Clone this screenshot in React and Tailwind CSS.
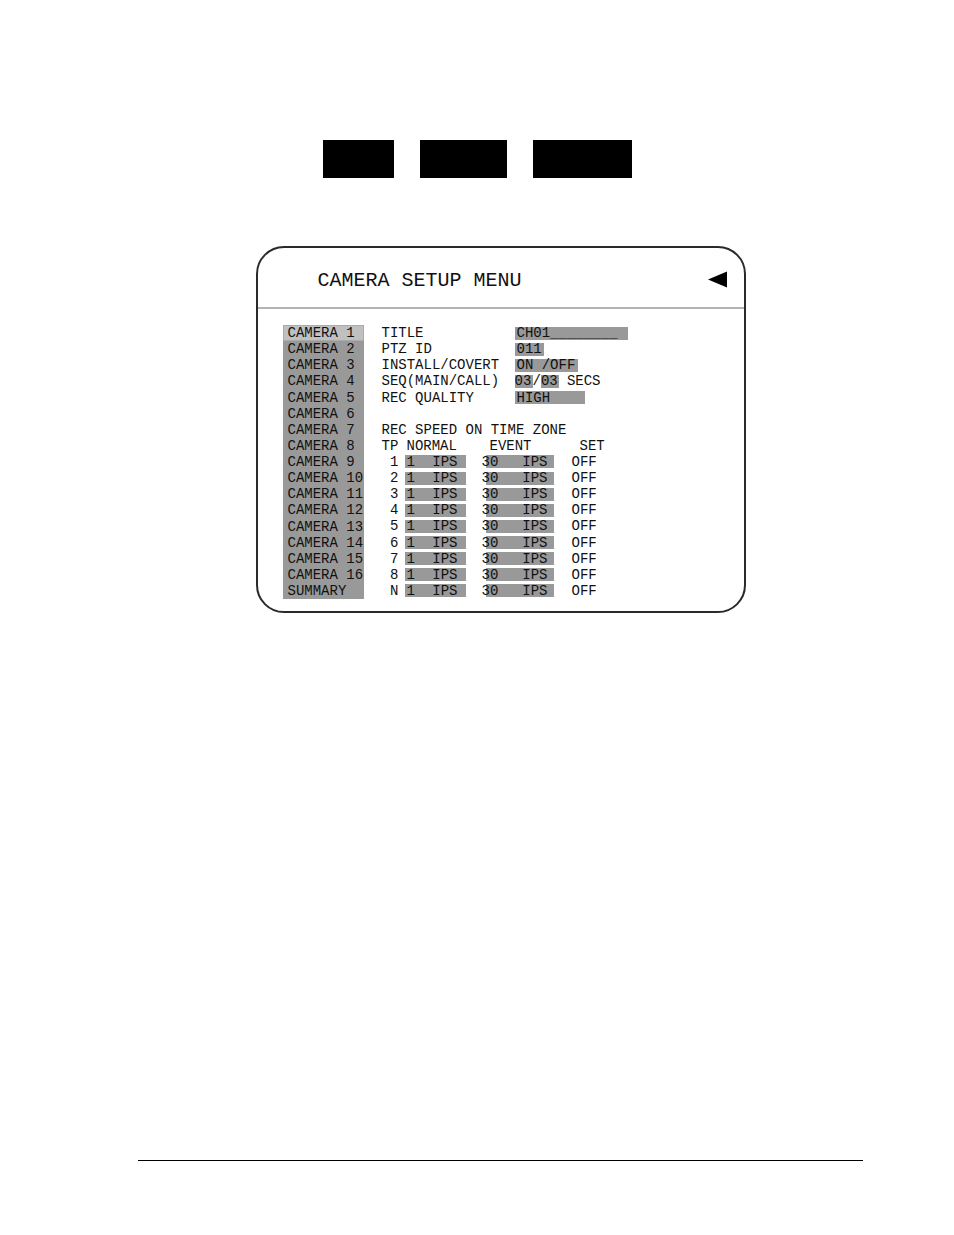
import React, { useState } from 'react';

const MENU = [
    ...Array.from({ length: 16 }, (_, i) => `CAMERA ${i + 1}`),
    'SUMMARY',
];

const ZONES = ['1', '2', '3', '4', '5', '6', '7', '8', 'N'];

const Redacted = ({ className }) => <div className={`h-[38px] bg-black ${className}`} />;

const Row = ({ label, id, children }) => (
    <div className="flex items-center">
        <label htmlFor={id} className="w-[133px] shrink-0">{label}</label>
        {children}
    </div>
);

const Field = ({ id, value, className, ...props }) => (
    <input
        id={id}
        defaultValue={value}
        className={`h-[13px] bg-[#999] leading-3 outline-none ${className}`}
        {...props}
    />
);

const CameraList = () => {
    const [active, setActive] = useState(0);

    return (
        <nav className="flex w-[81px] flex-col bg-[#999]">
            {MENU.map((name, i) => (
                <button
                    key={name}
                    onClick={() => setActive(i)}
                    className={`flex flex-1 items-center pl-[5px] text-left whitespace-nowrap ${
                        i === active ? 'bg-[#c0c0c0] inset-ring inset-ring-[#aaa]' : ''
                    }`}
                >
                    {name}
                </button>
            ))}
        </nav>
    );
};

const SpeedTable = () => (
    <table className="h-full w-full table-fixed border-collapse text-left">
        <colgroup>
            <col className="w-[23px]" />
            <col className="w-[77px]" />
            <col className="w-[90px]" />
            <col />
        </colgroup>
        <thead>
            <tr>
                <th className="p-0 font-normal">TP</th>
                <th className="p-0 pl-[2px] font-normal">NORMAL</th>
                <th className="p-0 pl-2 font-normal">EVENT</th>
                <th className="p-0 pl-2 font-normal">SET</th>
            </tr>
        </thead>
        <tbody>
            {ZONES.map((zone) => (
                <tr key={zone}>
                    <td className="p-0 pr-[6px] text-right">{zone}</td>
                    <td className="p-0">
                        <button className="flex h-[13px] w-[61px] items-center justify-between bg-[#999] pr-2 pl-[2px] leading-3">
                            <span>1</span>
                            <span>IPS</span>
                        </button>
                    </td>
                    <td className="p-0">
                        <button className="flex h-[13px] w-[72px] items-center justify-between bg-[linear-gradient(to_right,transparent_4px,#999_4px)] pr-[6px] leading-3">
                            <span>30</span>
                            <span>IPS</span>
                        </button>
                    </td>
                    <td className="p-0">
                        <button className="block leading-3">OFF</button>
                    </td>
                </tr>
            ))}
        </tbody>
    </table>
);

const CameraSetup = () => (
    <section className="flex aspect-[490/367] w-[67%] min-w-[490px] flex-col rounded-[28px] border-2 border-[#2a2a2a]">
        <header className="flex h-[61px] items-center justify-between border-b-2 border-[#b4b4b4] pt-[6px] pr-[17px] pl-[60px]">
            <h1 className="text-xl">CAMERA SETUP MENU</h1>
            <button aria-label="Back" className="pb-[2px]">
                <svg width="19" height="17" viewBox="0 0 19 17" className="block">
                    <path d="M0 8.5 19 0.5V16.5Z" fill="#000" />
                </svg>
            </button>
        </header>

        <div className="flex flex-1 gap-[18px] pt-[16px] pb-[12px] pl-[25px] text-sm leading-4">
            <CameraList />

            <div className="grid flex-1 grid-rows-[5fr_1fr_1fr_10fr]">
                <form className="grid" onSubmit={(e) => e.preventDefault()}>
                    <Row label="TITLE" id="title">
                        <Field id="title" value="CH01________" className="w-[113px] pl-[2px]" />
                    </Row>
                    <Row label="PTZ ID" id="ptz">
                        <Field id="ptz" value="011" className="w-[29px] pl-[2px]" />
                    </Row>
                    <Row label="INSTALL/COVERT" id="install">
                        <button id="install" type="button" className="h-[13px] w-[63px] bg-[#999] pl-[2px] text-left leading-3">
                            ON /OFF
                        </button>
                    </Row>
                    <Row label="SEQ(MAIN/CALL)" id="seq-main">
                        <Field id="seq-main" value="03" className="w-[18px]" />
                        <span>/</span>
                        <Field id="seq-call" value="03" aria-label="CALL" className="w-[18px]" />
                        <span className="pl-2">SECS</span>
                    </Row>
                    <Row label="REC QUALITY" id="quality">
                        <select id="quality" className="h-[13px] w-[70px] appearance-none bg-[#999] pl-[2px] leading-3 outline-none">
                            <option>HIGH</option>
                        </select>
                    </Row>
                </form>
                <div />
                <h2 className="self-center">REC SPEED ON TIME ZONE</h2>
                <SpeedTable />
            </div>
        </div>
    </section>
);

export default function App() {
    return (
        <div className="flex min-h-screen flex-col bg-white pt-[140px] pb-[74px] font-['Liberation_Mono',monospace] text-[#111]">
            <div className="flex justify-center gap-[26px]">
                <Redacted className="w-[71px]" />
                <Redacted className="w-[87px]" />
                <Redacted className="w-[99px]" />
            </div>

            <main className="mt-[68px] mr-[91px] ml-[138px] flex flex-1 flex-col items-center">
                <CameraSetup />
            </main>

            <hr className="mr-[91px] ml-[138px] border-black" />
        </div>
    );
}
